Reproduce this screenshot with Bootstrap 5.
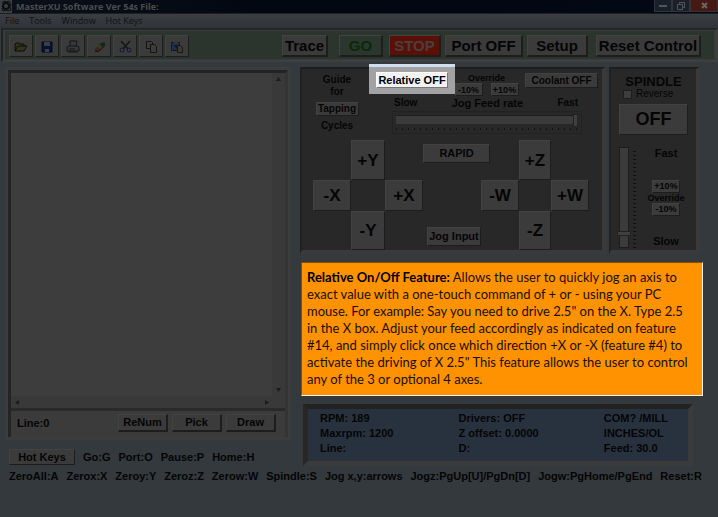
<!DOCTYPE html>
<html lang="en">
<head>
<meta charset="utf-8">
<meta name="viewport" content="width=device-width, initial-scale=1">
<title>MasterXU Software</title>
<link href="https://cdn.jsdelivr.net/npm/bootstrap@5.3.0/dist/css/bootstrap.min.css" rel="stylesheet">
<style>
body{background:#33393c;color:#050505;font:bold 11px/13px "Liberation Sans",Arial,sans-serif;min-height:100vh}
button{font:inherit;color:inherit;padding:0;white-space:nowrap}
.key{background:#3b3b3b;border:1px solid;border-color:#424242 #1d1d1d #1d1d1d #424242;padding:0}
.f9{font-size:9px;line-height:10px}.f10{font-size:10px;line-height:12px}
.pct{width:28px;height:13px}
.titlebar{height:14px;background:linear-gradient(90deg,#0b1119,#020711 35%,#020815);color:#4a4d50;font:bold 9px/13px "Open Sans","Noto Sans",sans-serif;border-bottom:1px solid #1d2023}
.winbtns button{border:1px solid #30353b;border-top:0;background:#1a2029;height:12px;width:18px}
.winbtns .shut{background:#461a12;width:28px}
.menubar{height:14px;background:linear-gradient(#3a3d41,#303338);font:9px/13px "Open Sans","Noto Sans",sans-serif;padding-left:5px;gap:10px}
.menubar a{color:#101214;text-decoration:none}
.toolbar{margin-left:1px;border:2px solid;border-color:#242629 #3d3f40 #3d3f40 #202224;background:#3a3c3c;padding:1px 2px}
.toolbar-inner{background:#2c352d;padding:4px 13px 2px 4px;height:28px}
.tools{gap:2px}
.ico{width:24px;height:22px}
.big{font-size:15px;line-height:18px;height:22px;border-width:1px 2px 2px 1px}
.trace{width:46px;margin-right:11px}
.go{background:#2b372e;color:#0a2a05;width:44px;margin-right:6px}
.stop{background:#5b1005;color:#484040;width:52px}
.port{width:78px}.setup{width:61px}.reset{width:105px}
.main{display:grid;grid-template-columns:minmax(0,286fr) minmax(0,403fr);gap:9px;padding:5px 15px 0 5px}
.editor{border:3px solid #3b3c3c}
.editor-in{border:solid;border-width:3px 3px 0;border-color:#242424 #343434 #343434 #242424;background:#393939}
.editor textarea{background:#3d3d3d;border:0;resize:none;height:323px;overflow:hidden;color:#000}
.vbar,.hbar{background:#393939}
.vbar{width:14px}.hbar{height:12px}
.linebar{border-top:3px solid #2a2a2a;background:#3b3b3b;padding:2px 9px 4px 6px;height:29px}
.linebar .key{height:18px;width:50px;border-width:1px 2px 2px 1px}
.panel{background:#282828;border:solid;border-width:2px 4px 4px 2px;border-color:#1e1e1e #3a3a3a #3a3a3a #202020}
.panels{display:grid;grid-template-columns:306fr 91fr;gap:3px;padding-right:3px}
.guide{width:70px;padding-top:5px}
.guide .key{width:43px}
.coolant{width:73px;height:15px}
.scale{padding:1px 24px 0 22px}
.spot{position:relative;height:16px;width:72px;margin-top:3px}
.spot::before{content:"";position:absolute;left:-7px;right:-7px;top:-8px;bottom:-6px;background:#a2a2a4;border-top:3px solid #d0dff0}
.spot button{position:relative;width:100%;height:100%;line-height:13px;background:#f2f2f2;border:1px solid;border-color:#fff #777 #777 #fff;color:#000}
.feed{border:1px solid #222;padding:3px 3px 2px;height:23px;margin:1px 20px 0}
input[type=range]{appearance:none;display:block;margin:0;background:transparent;width:100%}
.feed input{height:9px;background:#3b3b3b;border-top:1px solid #1d1d1d}
input[type=range]::-webkit-slider-thumb{appearance:none;width:5px;height:13px;background:#404040;border:1px solid #222}
.ticks{height:2px;margin-top:4px;background:repeating-linear-gradient(90deg,#111 0 1px,transparent 1px 6px)}
.pad{display:grid;grid-template-columns:38fr 34fr 38fr 58fr 38fr 32fr 38fr;grid-template-rows:40px 31px 39px;padding:6px 13px 0 11px}
.pad .key{font-size:17px}
.pad .word{font-size:11px;height:19px}
.c2{grid-column:2}.c3{grid-column:3}.c5{grid-column:5}.c6{grid-column:6}.c7{grid-column:7}
.rapid{grid-column:4/6;width:67px;margin-top:4px}
.jog{grid-column:4;margin:16px 0 0 4px}
.r1{grid-row:1}.r2{grid-row:2}.r3{grid-row:3}
.spin-title{font-size:13px;padding-top:6px}
.spin-off{font-size:18px;height:31px}
.vert{writing-mode:vertical-lr;direction:rtl;height:101px;width:10px!important;background:#3b3b3b!important;border:1px solid #1d1d1d}
.vert::-webkit-slider-thumb{width:14px!important;height:5px!important}
.vticks{width:3px;height:97px;background:repeating-linear-gradient(#111 0 1px,transparent 1px 4px)}
.callout{background:#ff9200;color:#1a0e00;border:1px solid;border-color:#8a4f00 #f4f4f4 #f4f4f4 #8a4f00;margin:8px 0 0 1px;padding:6px 5px 7px;font:13px/17px Lato,"Open Sans",sans-serif;white-space:nowrap}
.callout strong{color:#000}
.status{margin:8px 10px 0 3px;border:5px solid;border-color:#222 #3b3b3b #3b3b3b #272727;background:#28323e;height:62px;padding:2px 20px 0 12px}
.status span{display:block;line-height:15px;white-space:nowrap}
.chk{appearance:none;width:9px;height:9px;background:#3d3d3d;border:1px solid #1d1d1d;margin:0}
.hot{padding:9px 0 0 4px}
.hot .key{width:66px;height:16px;line-height:13px}
.shortcuts{padding:4px 16px 0 9px}
</style>
<script src="https://cdn.jsdelivr.net/npm/bootstrap@5.3.0/dist/js/bootstrap.bundle.min.js"></script>
</head>
<body>
<header>
<div class="titlebar d-flex align-items-start justify-content-between">
 <div class="d-flex"><svg class="me-1" width="12" height="13" viewBox="0 0 12 13"><rect width="12" height="13" fill="#3c3f41"/><circle cx="6" cy="6" r="3" fill="none" stroke="#0b0d0f" stroke-width="2"/><path d="M2 3l2-2 2 1 3-1 2 4-1 2 1 3-3 1-2-1-3 1-1-3" fill="none" stroke="#0b0d0f"/></svg><span>MasterXU Software Ver 54s File:</span></div>
 <div class="winbtns d-flex"><button aria-label="Minimize" class="d-flex align-items-center justify-content-center"><svg width="8" height="4"><rect y="1" width="8" height="2" fill="#555"/></svg></button><button aria-label="Restore" class="d-flex align-items-center justify-content-center"><svg width="8" height="8" fill="none" stroke="#555"><path d="M2.5 2V.5h5v5H6M.5 2.500h5v5h-5z"/></svg></button><button aria-label="Close" class="shut d-flex align-items-center justify-content-center"><svg width="7" height="7"><path d="M1 1l5 5M6 1L1 6" stroke="#666" stroke-width="2"/></svg></button></div>
</div>
<nav class="menubar d-flex"><a href="#">File</a><a href="#">Tools</a><a href="#">Window</a><a href="#">Hot Keys</a></nav>
<div class="toolbar"><div class="toolbar-inner d-flex justify-content-between">
 <div class="tools d-flex">
 <button class="key ico" aria-label="Open"><svg width="14" height="12" viewBox="0 0 14 12"><path d="M1 10V3l1-1h3l1 1h4v2M1 10l3-5h9l-3 5z" fill="#34331c" stroke="#0c0c07"/></svg></button>
 <button class="key ico" aria-label="Save"><svg width="12" height="12" viewBox="0 0 12 12"><path d="M1 1h10v10H1z" fill="#061333" stroke="#040a1a"/><path d="M3 1h6v4H3zM4 8h4v3H4z" fill="#3b3d42"/></svg></button>
 <button class="key ico" aria-label="Print"><svg width="14" height="13" viewBox="0 0 14 13"><path d="M4 6V1h7l-1 5M1 7l2-1h9l1 1v4H1zM2 12h10M3 9h6" fill="#36383a" stroke="#131516"/></svg></button>
 <button class="key ico" aria-label="Erase"><svg width="13" height="12" viewBox="0 0 13 12"><path d="M1.500 8.500l3-3 3 2.500-2.500 2.500H2.500z" fill="#43201b"/><path d="M4.500 5.500l2-2 3 2.500-2 2z" fill="#3a3920"/><path d="M6.500 3.500L9 1.500h3V4L9.500 6z" fill="#0f2a16"/><path d="M2 10.500h3.500l6.500-6" stroke="#111" fill="none"/></svg></button>
 <button class="key ico" aria-label="Cut"><svg width="13" height="13" viewBox="0 0 13 13" fill="none"><path d="M2 1l7 8M11 1L4 9" stroke="#141617" stroke-width="1.500"/><circle cx="3" cy="10" r="2" stroke="#0b1c33"/><circle cx="10" cy="10" r="2" stroke="#0b1c33"/></svg></button>
 <button class="key ico" aria-label="Copy"><svg width="13" height="13" viewBox="0 0 13 13" fill="#3d3c35" stroke="#131313"><path d="M1.500 1.500h5l1 1v6h-6z"/><path d="M5.500 4.500h4l2 2v6h-6z"/></svg></button>
 <button class="key ico" aria-label="Paste"><svg width="14" height="13" viewBox="0 0 14 13"><path d="M1.500 2.500h8v8h-8z" fill="#253040" stroke="#0b1830"/><path d="M4 1h4v2H4z" fill="#3c3a26"/><path d="M3 5l4 4V5" fill="#081a45"/><path d="M7.500 5.500h3l2 2v5h-5z" fill="#3d3a2c" stroke="#181712"/></svg></button>
 </div>
 <div class="d-flex">
 <button class="key big trace">Trace</button><button class="key big go">GO</button><button class="key big stop me-1">STOP</button><button class="key big port me-1">Port OFF</button><button class="key big setup me-2">Setup</button><button class="key big reset">Reset Control</button>
 </div>
</div></div>
</header>
<main class="main">
 <div>
 <section class="editor"><div class="editor-in d-flex flex-column">
  <div class="d-flex"><textarea class="flex-grow-1 w-100" aria-label="Program"></textarea><div class="vbar d-flex flex-column align-items-center justify-content-between py-1"><svg width="5" height="4"><path d="M0 4l2.500-4L5 4" fill="#1c1c1c"/></svg><svg width="5" height="4"><path d="M0 0l2.500 4L5 0" fill="#1c1c1c"/></svg></div></div>
  <div class="hbar d-flex align-items-center justify-content-between ps-1 pe-3"><svg width="4" height="5"><path d="M4 0L0 2.500 4 5" fill="#1c1c1c"/></svg><svg width="4" height="5"><path d="M0 0l4 2.500L0 5" fill="#1c1c1c"/></svg></div>
  <div class="linebar d-flex align-items-center"><span class="me-auto">Line:0</span><div class="d-flex gap-1"><button class="key">ReNum</button><button class="key">Pick</button><button class="key">Draw</button></div></div>
 </div></section>
 <div class="hot d-flex gap-2 align-items-center"><button class="key me-n1">Hot Keys</button><span>Go:G</span><span>Port:O</span><span>Pause:P</span><span>Home:H</span></div>
 </div>
 <div>
  <div class="panels">
   <section class="panel">
    <div class="d-flex">
     <div class="guide text-center f10"><div>Guide</div><div>for</div><button class="key my-1 f10">Tapping</button><div>Cycles</div></div>
     <div class="flex-grow-1">
      <div class="d-flex justify-content-between ps-1 pe-1">
       <div class="spot"><button>Relative OFF</button></div>
       <div class="f9 text-center pt-1"><div>Override</div><div class="d-flex gap-1"><button class="key pct me-1">-10%</button><button class="key pct">+10%</button></div></div>
       <button class="key f10 mt-1 coolant">Coolant OFF</button>
      </div>
      <div class="scale d-flex justify-content-between"><span class="f10">Slow</span><label for="feed">Jog Feed rate</label><span class="f10">Fast</span></div>
      <div class="feed"><input id="feed" type="range" value="100"><div class="ticks"></div></div>
     </div>
    </div>
    <div class="pad">
     <button class="key c2 r1">+Y</button><button class="key r2">-X</button><button class="key c3 r2">+X</button><button class="key c2 r3">-Y</button>
     <button class="key word rapid r1">RAPID</button><button class="key word jog r3">Jog Input</button>
     <button class="key c6 r1">+Z</button><button class="key c5 r2">-W</button><button class="key c7 r2">+W</button><button class="key c6 r3">-Z</button>
    </div>
   </section>
   <section class="panel px-2">
    <div class="text-center spin-title">SPINDLE</div>
    <div class="d-flex align-items-center gap-1 f10 pb-1 ps-1"><input class="chk" type="checkbox" id="rev"><label for="rev" class="fw-normal">Reverse</label></div>
    <button class="key spin-off w-100">OFF</button>
    <div class="d-flex pt-2 mt-1">
     <input class="vert" type="range" value="12" aria-label="Spindle speed"><div class="vticks ms-1 mt-1"></div>
     <div class="d-flex flex-column align-items-center justify-content-between flex-grow-1 ps-2"><span>Fast</span><div class="f9 text-center"><button class="key pct d-block mx-auto">+10%</button>Override<button class="key pct d-block mx-auto">-10%</button></div><span>Slow</span></div>
    </div>
   </section>
  </div>
  <aside class="callout"><strong>Relative On/Off Feature:</strong> Allows the user to quickly jog an axis to<br>exact value with a one-touch command of + or - using your PC<br>mouse. For example: Say you need to drive 2.5" on the X. Type 2.5<br>in the X box. Adjust your feed accordingly as indicated on feature<br>#14, and simply click once which direction +X or -X (feature #4) to<br>activate the driving of X 2.5" This feature allows the user to control<br>any of the 3 or optional 4 axes.</aside>
  <section class="status d-flex justify-content-between"><div><span>RPM: 189</span><span>Maxrpm: 1200</span><span>Line:</span></div><div><span>Drivers: OFF</span><span>Z offset: 0.0000</span><span>D:</span></div><div><span>COM? /MILL</span><span>INCHES/OL</span><span>Feed: 30.0</span></div></section>
 </div>
</main>
<footer class="shortcuts d-flex justify-content-between text-nowrap"><span>ZeroAll:A</span><span>Zerox:X</span><span>Zeroy:Y</span><span>Zeroz:Z</span><span>Zerow:W</span><span>Spindle:S</span><span>Jog x,y:arrows</span><span>Jogz:PgUp[U]/PgDn[D]</span><span>Jogw:PgHome/PgEnd</span><span>Reset:R</span></footer>
</body>
</html>
